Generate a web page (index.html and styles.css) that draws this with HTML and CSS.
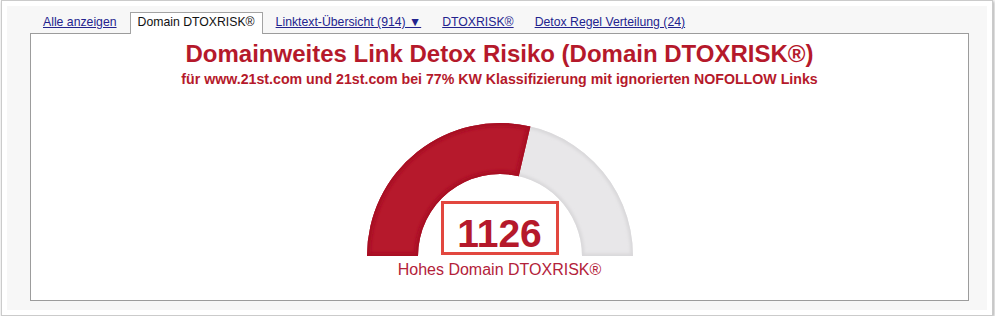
FILE: index.html
```html
<!DOCTYPE html>
<html lang="de">
<head>
<meta charset="utf-8">
<title>Domain DTOXRISK</title>
<link rel="stylesheet" href="styles.css">
</head>
<body>
<div class="window">
  <div class="panel">
    <ul class="tabs">
      <li class="tab"><a href="#">Alle anzeigen</a></li>
      <li class="tab active">Domain DTOXRISK®</li>
      <li class="tab"><a href="#">Linktext-Übersicht (914) ▼</a></li>
      <li class="tab"><a href="#">DTOXRISK®</a></li>
      <li class="tab"><a href="#">Detox Regel Verteilung (24)</a></li>
    </ul>
    <div class="content">
      <h1 class="title">Domainweites Link Detox Risiko (Domain DTOXRISK®)</h1>
      <p class="subtitle">für www.21st.com und 21st.com bei 77% KW Klassifizierung mit ignorierten NOFOLLOW Links</p>
      <div class="gauge">
        <svg class="gauge-svg" width="268" height="135" viewBox="0 0 268 135">
          <defs>
            <clipPath id="bgclip"><path d="M1 134 A133 133 0 0 1 267 134 L216 134 A82 82 0 0 0 52 134 Z"/></clipPath>
            <clipPath id="fgclip"><path d="M1 134 A133 133 0 0 1 164.38 4.51 L152.73 54.16 A82 82 0 0 0 52 134 Z"/></clipPath>
            <filter id="soft" x="-10%" y="-10%" width="120%" height="120%"><feGaussianBlur stdDeviation="1.5"/></filter>
          </defs>
          <path d="M1 134 A133 133 0 0 1 267 134 L216 134 A82 82 0 0 0 52 134 Z" fill="#e8e7e9"/>
          <path d="M1 134 A133 133 0 0 1 267 134 L216 134 A82 82 0 0 0 52 134 Z" fill="none" stroke="#d9d8da" stroke-width="5" clip-path="url(#bgclip)" filter="url(#soft)"/>
          <path d="M1 134 A133 133 0 0 1 164.38 4.51 L152.73 54.16 A82 82 0 0 0 52 134 Z" fill="#b6192c"/>
          <path d="M1 134 A133 133 0 0 1 164.38 4.51 L152.73 54.16 A82 82 0 0 0 52 134 Z" fill="none" stroke="#a80d23" stroke-width="7" clip-path="url(#fgclip)" filter="url(#soft)"/>
        </svg>
        <div class="value">1126</div>
      </div>
      <p class="label">Hohes Domain DTOXRISK®</p>
    </div>
  </div>
</div>
</body>
</html>
```
FILE: styles.css
```css
html, body {
  margin: 0;
  padding: 0;
  background: #ffffff;
}

body {
  font-family: "Liberation Sans", Arial, sans-serif;
}

.window {
  box-sizing: border-box;
  width: 992px;
  height: 316px;
  margin-left: 1px;
  border: 1px solid #cbcbcb;
  padding: 5px;
  background: #ffffff;
  box-shadow: 1px 1px 3px rgba(0, 0, 0, 0.35);
}

.panel {
  box-sizing: border-box;
  height: 304px;
  background: #f7f7f7;
  padding: 0 18px 0 23px;
}

.tabs {
  list-style: none;
  margin: 0 0 -1px 0;
  padding: 0 0 0 5px;
  height: 28px;
  display: flex;
  align-items: flex-end;
  gap: 5px;
  position: relative;
  z-index: 2;
}

.tab {
  box-sizing: border-box;
  height: 22px;
  padding: 2px 7px 5px;
  border: 1px solid transparent;
  border-bottom: none;
  font-size: 12.25px;
  line-height: 14px;
  white-space: nowrap;
}

.tab a {
  color: #23238e;
  text-decoration: underline;
}

.tab.active {
  background: #ffffff;
  border-color: #a3a3a3;
  color: #111111;
}

.content {
  box-sizing: border-box;
  height: 268px;
  background: #ffffff;
  border: 1px solid #9c9c9c;
  padding-top: 6px;
  text-align: center;
  position: relative;
  z-index: 1;
}

.title {
  margin: 0;
  font-size: 24px;
  line-height: 28px;
  font-weight: bold;
  color: #b5192b;
}

.subtitle {
  margin: 3px 0 0;
  font-size: 14.2px;
  line-height: 17px;
  font-weight: bold;
  color: #b5192b;
}

.gauge {
  position: relative;
  width: 268px;
  height: 135px;
  margin: 34px auto 0;
}

.gauge-svg {
  display: block;
}

.value {
  position: absolute;
  left: 50%;
  top: 79px;
  transform: translateX(-50%);
  box-sizing: border-box;
  width: 118px;
  height: 54px;
  border: 3px solid #e2473f;
  background: #ffffff;
  padding-top: 11px;
  font-size: 39px;
  line-height: 37px;
  font-weight: bold;
  color: #b5192b;
}

.label {
  margin: 4px 0 0;
  font-size: 16px;
  line-height: 18px;
  color: #b3223a;
}
```
